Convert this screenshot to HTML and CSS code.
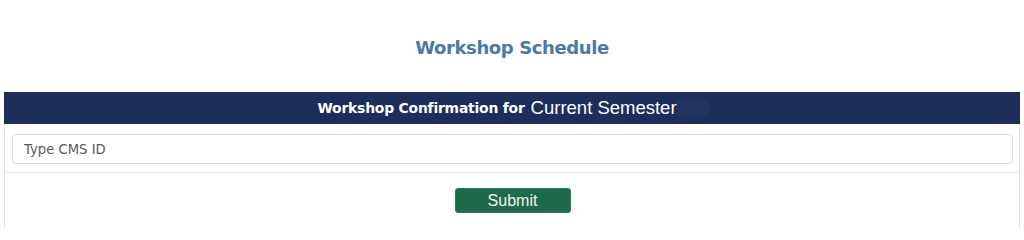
FILE: index.html
```html
<!DOCTYPE html>
<html>
<head>
<meta charset="utf-8">
<link rel="stylesheet" href="styles.css">
</head>
<body>
<div class="page">
  <h2 class="title">Workshop Schedule</h2>
  <div class="panel">
    <div class="panel-head">
      <span class="head-bold">Workshop Confirmation for</span>
      <span class="head-sem">Current Semester</span><span class="head-blob"></span>
    </div>
    <div class="row row-input">
      <input class="cms" type="text" placeholder="Type CMS ID">
    </div>
    <div class="row row-submit">
      <button class="submit" type="button">Submit</button>
    </div>
  </div>
</div>
</body>
</html>
```

FILE: styles.css
```css
html, body {
  margin: 0;
  padding: 0;
  background: #ffffff;
}
.page {
  padding: 0 4px;
  font-family: Tahoma, "DejaVu Sans", Verdana, sans-serif;
}
.title {
  margin: 0;
  padding-top: 37px;
  height: 92px;
  box-sizing: border-box;
  text-align: center;
  color: #4a79a8;
  font-size: 18px;
  font-weight: bold;
  line-height: 22px;
  font-family: "DejaVu Sans", sans-serif;
  letter-spacing: -0.4px;
}
.panel {
  border-left: 1px solid #e2e2e2;
  border-right: 1px solid #e2e2e2;
}
.panel-head {
  background: #1b2f5a;
  height: 32px;
  margin: 0 -1px;
  display: flex;
  align-items: center;
  justify-content: center;
  color: #fff;
  padding-left: 2px;
}
.head-bold {
  font-family: "DejaVu Sans", sans-serif;
  font-weight: bold;
  font-size: 13.9px;
  letter-spacing: -0.2px;
  margin-right: 6px;
}
.head-sem {
  font-family: "Liberation Sans", Arial, sans-serif;
  font-size: 18.5px;
}
.head-blob {
  display: inline-block;
  width: 32px;
  height: 17px;
  background: #1f3461;
}
.row-input {
  padding: 10px 6px 8px 7px;
  border-bottom: 1px solid #e4e4e4;
}
.cms {
  display: block;
  width: 100%;
  box-sizing: border-box;
  height: 30px;
  border: 1px solid #dcdcdc;
  border-radius: 4px;
  padding: 0 11px;
  font-family: "DejaVu Sans", sans-serif;
  font-size: 13.2px;
  color: #555;
  outline: none;
}
.cms::placeholder {
  color: #5a5a5a;
}
.row-submit {
  display: flex;
  justify-content: center;
  padding-top: 15px;
  height: 55px;
  box-sizing: border-box;
}
.submit {
  width: 116px;
  height: 25px;
  background: #1e6a4b;
  border: 1px solid #2a7a5a;
  border-radius: 3px;
  color: #f2f2f2;
  font-family: "Liberation Sans", Arial, sans-serif;
  font-size: 16px;
  padding: 0;
  margin-left: 1px;
}
```
